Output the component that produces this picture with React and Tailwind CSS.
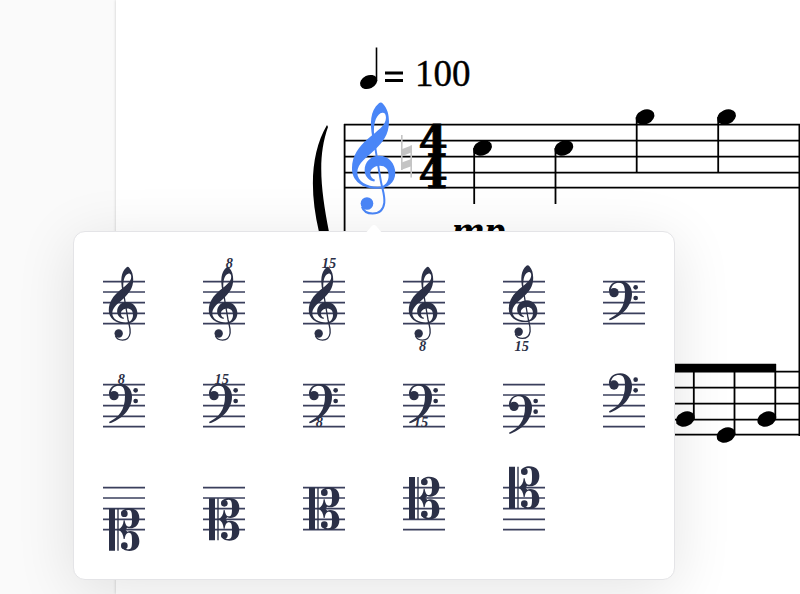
import React, { useState } from "react";

const LINES = [92, 123, 155, 187, 218];

const CLEFS = [
    { name: "Treble clef", type: "g" },
    { name: "Treble clef 8va alta", type: "g", mark: "8", x: 79, y: 51 },
    { name: "Treble clef 15ma alta", type: "g", mark: "15", x: 78, y: 51 },
    { name: "Treble clef 8va bassa", type: "g", mark: "8", x: 59, y: 299 },
    { name: "Treble clef 15ma bassa", type: "g", mark: "15", x: 56, y: 299, shift: -5 },
    { name: "Bass clef", type: "f" },
    { name: "Bass clef 8va alta", type: "f", mark: "8", x: 55, y: 91 },
    { name: "Bass clef 15ma alta", type: "f", mark: "15", x: 56, y: 91 },
    { name: "Bass clef 8va bassa", type: "f", mark: "8", x: 49, y: 219 },
    { name: "Bass clef 15ma bassa", type: "f", mark: "15", x: 54, y: 219 },
    { name: "Baritone clef (F)", type: "f", shift: 32 },
    { name: "Subbass clef", type: "f", shift: -32 },
    { name: "Baritone clef (C)", type: "c", shift: 63 },
    { name: "Tenor clef", type: "c", shift: 32 },
    { name: "Alto clef", type: "c", shift: 0 },
    { name: "Mezzo-soprano clef", type: "c", shift: -32 },
    { name: "Soprano clef", type: "c", shift: -63 },
];

// origin is the left edge of the clef on the G line, one staff space is 48 units
function GClef() {
    return (
        <g transform="translate(-157 -397)">
            <path
                fill="currentColor"
                d="M267 245C267 286 247 306 228 326C202 352 172 368 172 398C172 424 200 440 234 440C256 440 266 424 266 406C266 387 256 377 240 377C224 377 211 387 211 399C211 409 216 415 225 419L223 424C205 421 194 406 194 390C194 366 212 347 238 347C267 347 286 372 286 398C286 428 262 446 232 446C187 446 156 422 156 385C156 346 178 318 204 296C232 272 258 256 258 233C258 223 254 217 247 218C232 220 218 245 223 289L217 291C210 250 210 212 236 190Q243 184 249 191C263 206 267 225 267 245Z"
            />
            <path
                fill="none"
                stroke="currentColor"
                strokeWidth="6"
                d="M220 288L243 425C248 450 255 465 253 488C250 510 238 520 218 520C202 520 190 512 186 500"
            />
            <circle cx="201" cy="490" r="19" fill="currentColor" />
        </g>
    );
}

function FClef() {
    return (
        <g fill="currentColor">
            <path d="M18 124C16 103 30 90 52 90C74 90 87 107 87 128C87 168 53 197 20 208L18 204C47 190 66 168 66 126C66 106 62 95 48 95C35 95 26 102 24 116Z" />
            <circle cx="33" cy="125" r="14" />
            <circle cx="98" cy="109" r="7" />
            <circle cx="98" cy="141" r="7" />
        </g>
    );
}

function CClefArm() {
    return (
        <g fill="currentColor">
            <path d="M46 0C56 -5 61 -14 62 -28H65C67 -16 70 -9 78 -9C87 -9 87 -20 87 -35C87 -50 86 -59 77 -59C70 -59 66 -57 66 -52L55 -50C57 -59 67 -64 79 -64C98 -64 109 -53 109 -35C109 -16 98 -4 82 -4C78 -4 75 -5 73 -6L67 0Z" />
            <circle cx="64" cy="-48" r="10" />
        </g>
    );
}

function CClef() {
    return (
        <g>
            <path fill="currentColor" d="M18 -63h18v126h-18zM43 -63h4v126h-4z" />
            <CClefArm />
            <g transform="scale(1 -1)">
                <CClefArm />
            </g>
        </g>
    );
}

function ClefIcon({ clef }) {
    const shift = clef.shift || 0;
    return (
        <svg viewBox="0 0 126 309" className="h-[103px] w-[42px] overflow-visible text-[#2b3047]">
            {LINES.map((y) => (
                <path key={y} d={`M0 ${y}h126`} stroke="#3a3f5c" strokeWidth="5" />
            ))}
            {clef.type === "g" && (
                <g transform={`translate(18 ${186 + shift}) scale(0.66)`}>
                    <GClef />
                </g>
            )}
            {clef.type === "f" && (
                <g transform={`translate(0 ${shift})`}>
                    <FClef />
                </g>
            )}
            {clef.type === "c" && (
                <g transform={`translate(0 ${155 + shift})`}>
                    <CClef />
                </g>
            )}
            {clef.mark && (
                <text
                    x={clef.x}
                    y={clef.y}
                    textAnchor="middle"
                    fill="currentColor"
                    className="font-['Liberation_Serif',serif] text-[43px] font-bold italic"
                >
                    {clef.mark}
                </text>
            )}
        </svg>
    );
}

function Note({ x, y, stemX, stemY }) {
    return (
        <g>
            <ellipse cx={x} cy={y} rx="9.8" ry="7.2" transform={`rotate(-25 ${x} ${y})`} />
            <path d={`M${stemX} ${y}V${stemY}`} stroke="black" strokeWidth="1.8" />
        </g>
    );
}

function Score() {
    return (
        <svg viewBox="116 0 684 450" className="block h-auto w-full">
            <g stroke="black" strokeWidth="1.8">
                {[125, 141, 157, 173, 188].map((y) => (
                    <path key={y} d={`M344 ${y - 0.3}H800`} />
                ))}
                {[372, 388, 404, 420, 435].map((y) => (
                    <path key={y} d={`M344 ${y - 0.3}H800`} />
                ))}
                <path d="M344.600 124V436M799.400 124V436" />
            </g>
            <path d="M327 125C311 152 309 190 319 232L326 260L334 260L329 232C321 190 317 158 328 127Z" />

            <ellipse cx="368.6" cy="82" rx="9" ry="6.6" transform="rotate(-25 368.6 82)" />
            <path d="M376.500 81V47.500" stroke="black" strokeWidth="1.6" />
            <path d="M385 73h18M385 80.500h18" stroke="black" strokeWidth="2.8" />
            <text x="415" y="86" stroke="black" strokeWidth="0.4" className="font-['Liberation_Serif',serif] text-[37px]">
                100
            </text>

            <g className="text-[#4a86f7]" transform="translate(352.3 172.5) scale(0.3333)">
                <GClef />
            </g>
            <g fill="#c4c4c4">
                <path d="M401 135h1.600v35h-1.600zM410.400 145.500h1.600v32h-1.600z" />
                <path d="M401 149.500L412 145.300V152.300L401 156.500ZM401 162.700L412 158.700V166L401 170Z" />
            </g>
            <g stroke="black" strokeWidth="0.8" className="font-['DejaVu_Serif',serif] text-[42px] font-bold">
                <text x="433" y="156" textAnchor="middle">4</text>
                <text x="433" y="188" textAnchor="middle">4</text>
            </g>

            <Note x={482.5} y={148} stemX={474.2} stemY={204} />
            <Note x={563.8} y={148} stemX={555.5} stemY={204} />
            <Note x={645} y={117} stemX={636.7} stemY={172} />
            <Note x={726.5} y={117} stemX={718.2} stemY={172} />
            <text x="452" y="244" className="font-['Liberation_Serif',serif] text-[42px] font-bold italic">
                mp
            </text>

            <path d="M600 363.800h176v8H600z" />
            <Note x={685.3} y={419} stemX={693.8} stemY={364} />
            <Note x={726} y={435} stemX={734.5} stemY={364} />
            <Note x={766.8} y={419} stemX={775.3} stemY={364} />
        </svg>
    );
}

function ClefMenu() {
    const [selected, setSelected] = useState("Treble clef");

    return (
        <div className="absolute top-[231px] left-[73px] w-[602px] rounded-xl border border-[#e4e4e7] bg-white py-[19px] shadow-[0_10px_60px_rgba(0,0,0,0.11)]">
            <svg viewBox="0 0 18 10" className="absolute -top-[8px] left-1/2 h-[10px] w-[18px] -translate-x-1/2">
                <path d="M0 9C4 7 6 1 9 1C12 1 14 7 18 9V10H0Z" fill="white" />
            </svg>
            <div className="grid grid-cols-6">
                {CLEFS.map((clef) => (
                    <button
                        key={clef.name}
                        type="button"
                        aria-label={clef.name}
                        aria-pressed={selected === clef.name}
                        onClick={() => setSelected(clef.name)}
                        className="flex items-center justify-center"
                    >
                        <ClefIcon clef={clef} />
                    </button>
                ))}
            </div>
        </div>
    );
}

export default function App() {
    return (
        <div className="relative flex min-h-screen overflow-hidden bg-[#fafafa]">
            <div className="w-29 shrink-0" />
            <main className="min-w-0 flex-1 bg-white shadow-[0_0_3px_rgba(0,0,0,0.2)]">
                <Score />
            </main>
            <ClefMenu />
        </div>
    );
}
